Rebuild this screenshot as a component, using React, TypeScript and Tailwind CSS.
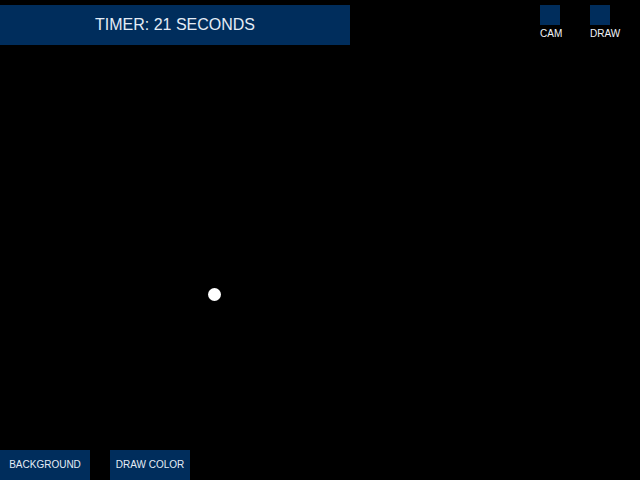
import React from "react";

export default function App() {
  return (
    <div
      className="relative w-[640px] h-[480px] bg-black overflow-hidden flex flex-col justify-between"
      style={{ fontFamily: '"Liberation Sans", Arial, sans-serif' }}
    >
      <div className="flex justify-between items-start">
        <div className="mt-[5px] h-[40px] w-[350px] bg-[#002d5c] flex items-center justify-center text-[16px] text-[#e4ecf6]">
          TIMER: 21 SECONDS
        </div>
        <div className="flex mt-[5px] mr-[20px] gap-[28px]">
          <div className="flex flex-col items-start w-[22px]">
            <div className="w-[20px] h-[20px] bg-[#002d5c]" />
            <div className="mt-[3px] text-[10px] leading-[12px] text-[#f2f5fa]">CAM</div>
          </div>
          <div className="flex flex-col items-start w-[30px]">
            <div className="w-[20px] h-[20px] bg-[#002d5c]" />
            <div className="mt-[3px] text-[10px] leading-[12px] text-[#f2f5fa]">DRAW</div>
          </div>
        </div>
      </div>
      <div className="flex gap-[20px]">
        <div className="w-[90px] h-[30px] pb-[1px] bg-[#002d5c] flex items-center justify-center text-[10px] text-[#e4ecf6]">
          BACKGROUND
        </div>
        <div className="w-[80px] h-[30px] pb-[1px] bg-[#002d5c] flex items-center justify-center text-[10px] text-[#e4ecf6]">
          DRAW COLOR
        </div>
      </div>
      <div className="absolute left-[208px] top-[288px] w-[13px] h-[13px] rounded-full bg-white" />
    </div>
  );
}
